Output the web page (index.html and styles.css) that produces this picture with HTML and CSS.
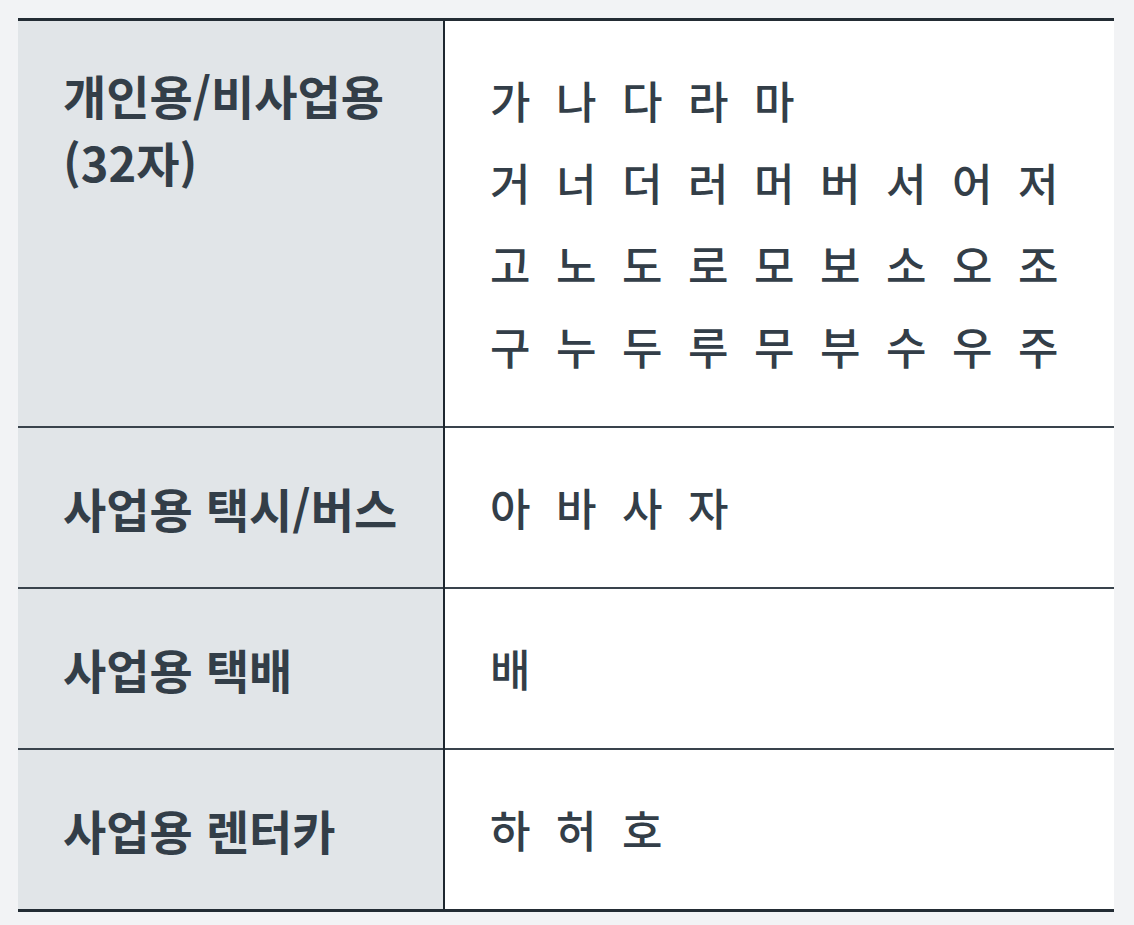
FILE: index.html
```html
<!DOCTYPE html>
<html lang="ko">
<head>
<meta charset="utf-8">
<title>번호판 용도 문자</title>
<link rel="stylesheet" href="styles.css">
</head>
<body>
<table class="plate-table">
  <tbody>
    <tr class="row row-first">
      <th class="head">개인용/비사업용<br>(32자)</th>
      <td class="chars">가 나 다 라 마<br>거 너 더 러 머 버 서 어 저<br>고 노 도 로 모 보 소 오 조<br>구 누 두 루 무 부 수 우 주</td>
    </tr>
    <tr class="row">
      <th class="head mid">사업용 택시/버스</th>
      <td class="chars">아 바 사 자</td>
    </tr>
    <tr class="row">
      <th class="head mid">사업용 택배</th>
      <td class="chars">배</td>
    </tr>
    <tr class="row row-last">
      <th class="head mid">사업용 렌터카</th>
      <td class="chars">하 허 호</td>
    </tr>
  </tbody>
</table>
</body>
</html>
```
FILE: styles.css
```css
html, body {
  margin: 0;
  padding: 0;
  background: #f2f3f5;
}

body {
  padding: 18px 20px 15px 18px;
  font-family: "Noto Sans CJK KR", "Noto Sans", sans-serif;
  color: #333e48;
}

.plate-table {
  width: 1096px;
  border-collapse: collapse;
  background: #ffffff;
  border-top: 3px solid #232c34;
  border-bottom: 3px solid #232c34;
}

.row + .row {
  border-top: 2px solid #39434c;
}

.head {
  width: 380px;
  background: #e1e5e8;
  border-right: 2px solid #1e272f;
  text-align: left;
  vertical-align: middle;
  padding: 38px 0 39px 45px;
  font-size: 47px;
  font-weight: 700;
  line-height: 67px;
  letter-spacing: 0;
  color: #333e48;
}

.row-first .head {
  vertical-align: top;
  padding-top: 40px;
}

.chars {
  text-align: left;
  vertical-align: middle;
  padding: 38px 20px 39px 45px;
  font-size: 44px;
  font-weight: 500;
  line-height: 82px;
  letter-spacing: 6.6px;
  color: #333e48;
}
```
